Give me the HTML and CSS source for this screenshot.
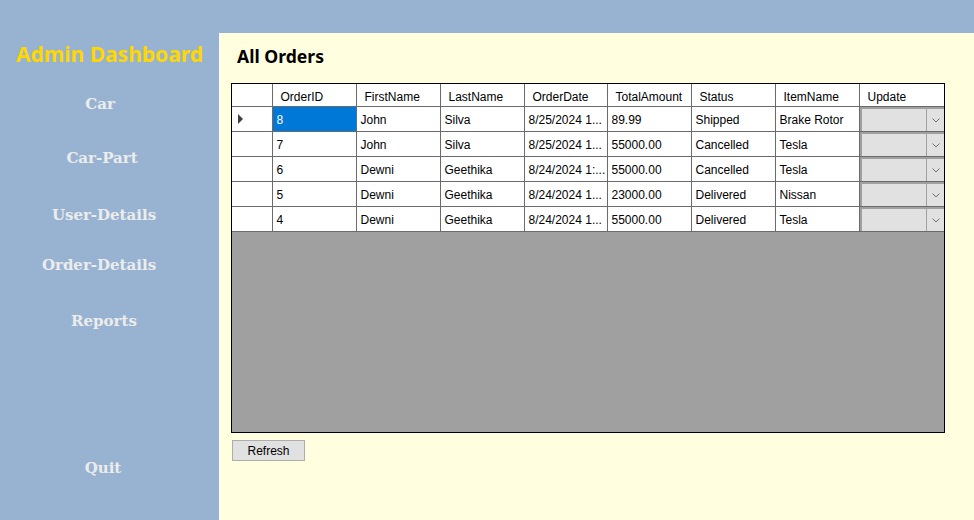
FILE: index.html
```html
<!DOCTYPE html>
<html>
<head>
<meta charset="utf-8">
<link rel="stylesheet" href="styles.css">
</head>
<body>
<div class="app">
  <aside class="sidebar">
    <div class="brand">Admin Dashboard</div>
    <div class="nav nav-car">Car</div>
    <div class="nav nav-part">Car-Part</div>
    <div class="nav nav-user">User-Details</div>
    <div class="nav nav-order">Order-Details</div>
    <div class="nav nav-reports">Reports</div>
    <div class="nav nav-quit">Quit</div>
  </aside>
  <main class="panel">
    <h1 class="title">All Orders</h1>
    <div class="grid">
      <table class="orders">
        <colgroup>
          <col class="c-rh"><col class="c-std"><col class="c-std"><col class="c-std"><col class="c-date"><col class="c-std"><col class="c-std"><col class="c-std"><col class="c-upd">
        </colgroup>
        <thead>
          <tr>
            <th class="rh"></th>
            <th>OrderID</th><th>FirstName</th><th>LastName</th><th>OrderDate</th><th>TotalAmount</th><th>Status</th><th>ItemName</th><th>Update</th>
          </tr>
        </thead>
        <tbody>
          <tr>
            <td class="rh"><span class="arrow"></span></td>
            <td class="sel">8</td><td>John</td><td>Silva</td><td>8/25/2024 1...</td><td>89.99</td><td>Shipped</td><td>Brake Rotor</td>
            <td class="upd"><div class="combo"><div class="combo-btn"><svg width="8" height="5" viewBox="0 0 8 5"><polyline points="0.5,0.5 4,4 7.5,0.5" fill="none" stroke="#707070" stroke-width="1"/></svg></div></div></td>
          </tr>
          <tr>
            <td class="rh"></td>
            <td>7</td><td>John</td><td>Silva</td><td>8/25/2024 1...</td><td>55000.00</td><td>Cancelled</td><td>Tesla</td>
            <td class="upd"><div class="combo"><div class="combo-btn"><svg width="8" height="5" viewBox="0 0 8 5"><polyline points="0.5,0.5 4,4 7.5,0.5" fill="none" stroke="#707070" stroke-width="1"/></svg></div></div></td>
          </tr>
          <tr>
            <td class="rh"></td>
            <td>6</td><td>Dewni</td><td>Geethika</td><td>8/24/2024 1:...</td><td>55000.00</td><td>Cancelled</td><td>Tesla</td>
            <td class="upd"><div class="combo"><div class="combo-btn"><svg width="8" height="5" viewBox="0 0 8 5"><polyline points="0.5,0.5 4,4 7.5,0.5" fill="none" stroke="#707070" stroke-width="1"/></svg></div></div></td>
          </tr>
          <tr>
            <td class="rh"></td>
            <td>5</td><td>Dewni</td><td>Geethika</td><td>8/24/2024 1...</td><td>23000.00</td><td>Delivered</td><td>Nissan</td>
            <td class="upd"><div class="combo"><div class="combo-btn"><svg width="8" height="5" viewBox="0 0 8 5"><polyline points="0.5,0.5 4,4 7.5,0.5" fill="none" stroke="#707070" stroke-width="1"/></svg></div></div></td>
          </tr>
          <tr>
            <td class="rh"></td>
            <td>4</td><td>Dewni</td><td>Geethika</td><td>8/24/2024 1...</td><td>55000.00</td><td>Delivered</td><td>Tesla</td>
            <td class="upd"><div class="combo"><div class="combo-btn"><svg width="8" height="5" viewBox="0 0 8 5"><polyline points="0.5,0.5 4,4 7.5,0.5" fill="none" stroke="#707070" stroke-width="1"/></svg></div></div></td>
          </tr>
        </tbody>
      </table>
    </div>
    <button class="refresh">Refresh</button>
  </main>
</div>
</body>
</html>
```

FILE: styles.css
```css
html, body {
  margin: 0;
  padding: 0;
}
body {
  background: #98b3d1;
  width: 974px;
  height: 520px;
  overflow: hidden;
}
.app {
  display: grid;
  grid-template-columns: 219px 1fr;
  height: 520px;
}
.sidebar {
  display: flex;
  flex-direction: column;
}
.brand {
  margin-top: 40px;
  height: 28px;
  line-height: 28px;
  text-align: center;
  font-family: "Noto Sans", sans-serif;
  font-weight: 700;
  font-size: 21px;
  color: #ffd700;
}
.nav {
  height: 20px;
  line-height: 20px;
  width: 200px;
  text-align: center;
  font-family: "DejaVu Serif", serif;
  font-weight: 700;
  font-size: 15px;
  color: #ececec;
}
.nav-car { margin-top: 26px; }
.nav-part { margin-top: 34px; margin-left: 2px; }
.nav-user { margin-top: 37px; margin-left: 4px; }
.nav-order { margin-top: 30px; margin-left: -1px; }
.nav-reports { margin-top: 36px; margin-left: 4px; }
.nav-quit { margin-top: 127px; margin-left: 3px; }

.panel {
  margin-top: 33px;
  background: #ffffe0;
  display: flex;
  flex-direction: column;
  padding-left: 12px;
}
.title {
  margin: 10px 0 0 6px;
  height: 26px;
  line-height: 26px;
  font-family: "Noto Sans", sans-serif;
  font-weight: 700;
  font-size: 17.6px;
  color: #000;
}
.grid {
  margin-top: 14px;
  width: 712px;
  height: 348px;
  border: 1px solid #000;
  background: #a0a0a0;
}
.orders {
  border-collapse: collapse;
  table-layout: fixed;
  width: 712px;
  font-family: "Liberation Sans", sans-serif;
  font-size: 12px;
  color: #000;
  background: #fff;
}
.c-rh { width: 40px; }
.c-std { width: 84px; }
.c-date { width: 83px; }
.c-upd { width: 85px; }
.orders th, .orders td {
  border: 1px solid #6b6b6b;
  padding: 2px 0 0 4px;
  white-space: nowrap;
  overflow: hidden;
  text-align: left;
  font-weight: 400;
}
.orders th {
  height: 18px;
  padding: 4px 0 0 8px;
  border-top: none;
}
.orders td {
  height: 22px;
}
.orders th:first-child, .orders td:first-child {
  border-left: none;
}
.orders th:last-child, .orders td:last-child {
  border-right: none;
}
.orders td.rh {
  padding: 0;
  height: 24px;
}
.arrow {
  display: block;
  width: 0;
  height: 0;
  margin-left: 6px;
  border-top: 5px solid transparent;
  border-bottom: 5px solid transparent;
  border-left: 5px solid #404040;
}
.orders td.sel {
  background: #0078d7;
  color: #fff;
}
.orders td.upd {
  padding: 0;
  height: 24px;
  background: #e1e1e1;
}
.combo {
  height: 22px;
  border-top: 2px solid #a0a0a0;
  border-left: 2px solid #a0a0a0;
  display: flex;
  justify-content: flex-end;
  background: #e1e1e1;
}
.combo-btn {
  width: 17px;
  height: 22px;
  border-left: 1px solid #a0a0a0;
  display: flex;
  align-items: center;
  justify-content: center;
}
.refresh {
  margin: 7px 0 0 1px;
  width: 73px;
  height: 21px;
  padding: 0;
  background: #e1e1e1;
  border: 1px solid #adadad;
  font-family: "Liberation Sans", sans-serif;
  font-size: 12px;
  color: #000;
}
```
